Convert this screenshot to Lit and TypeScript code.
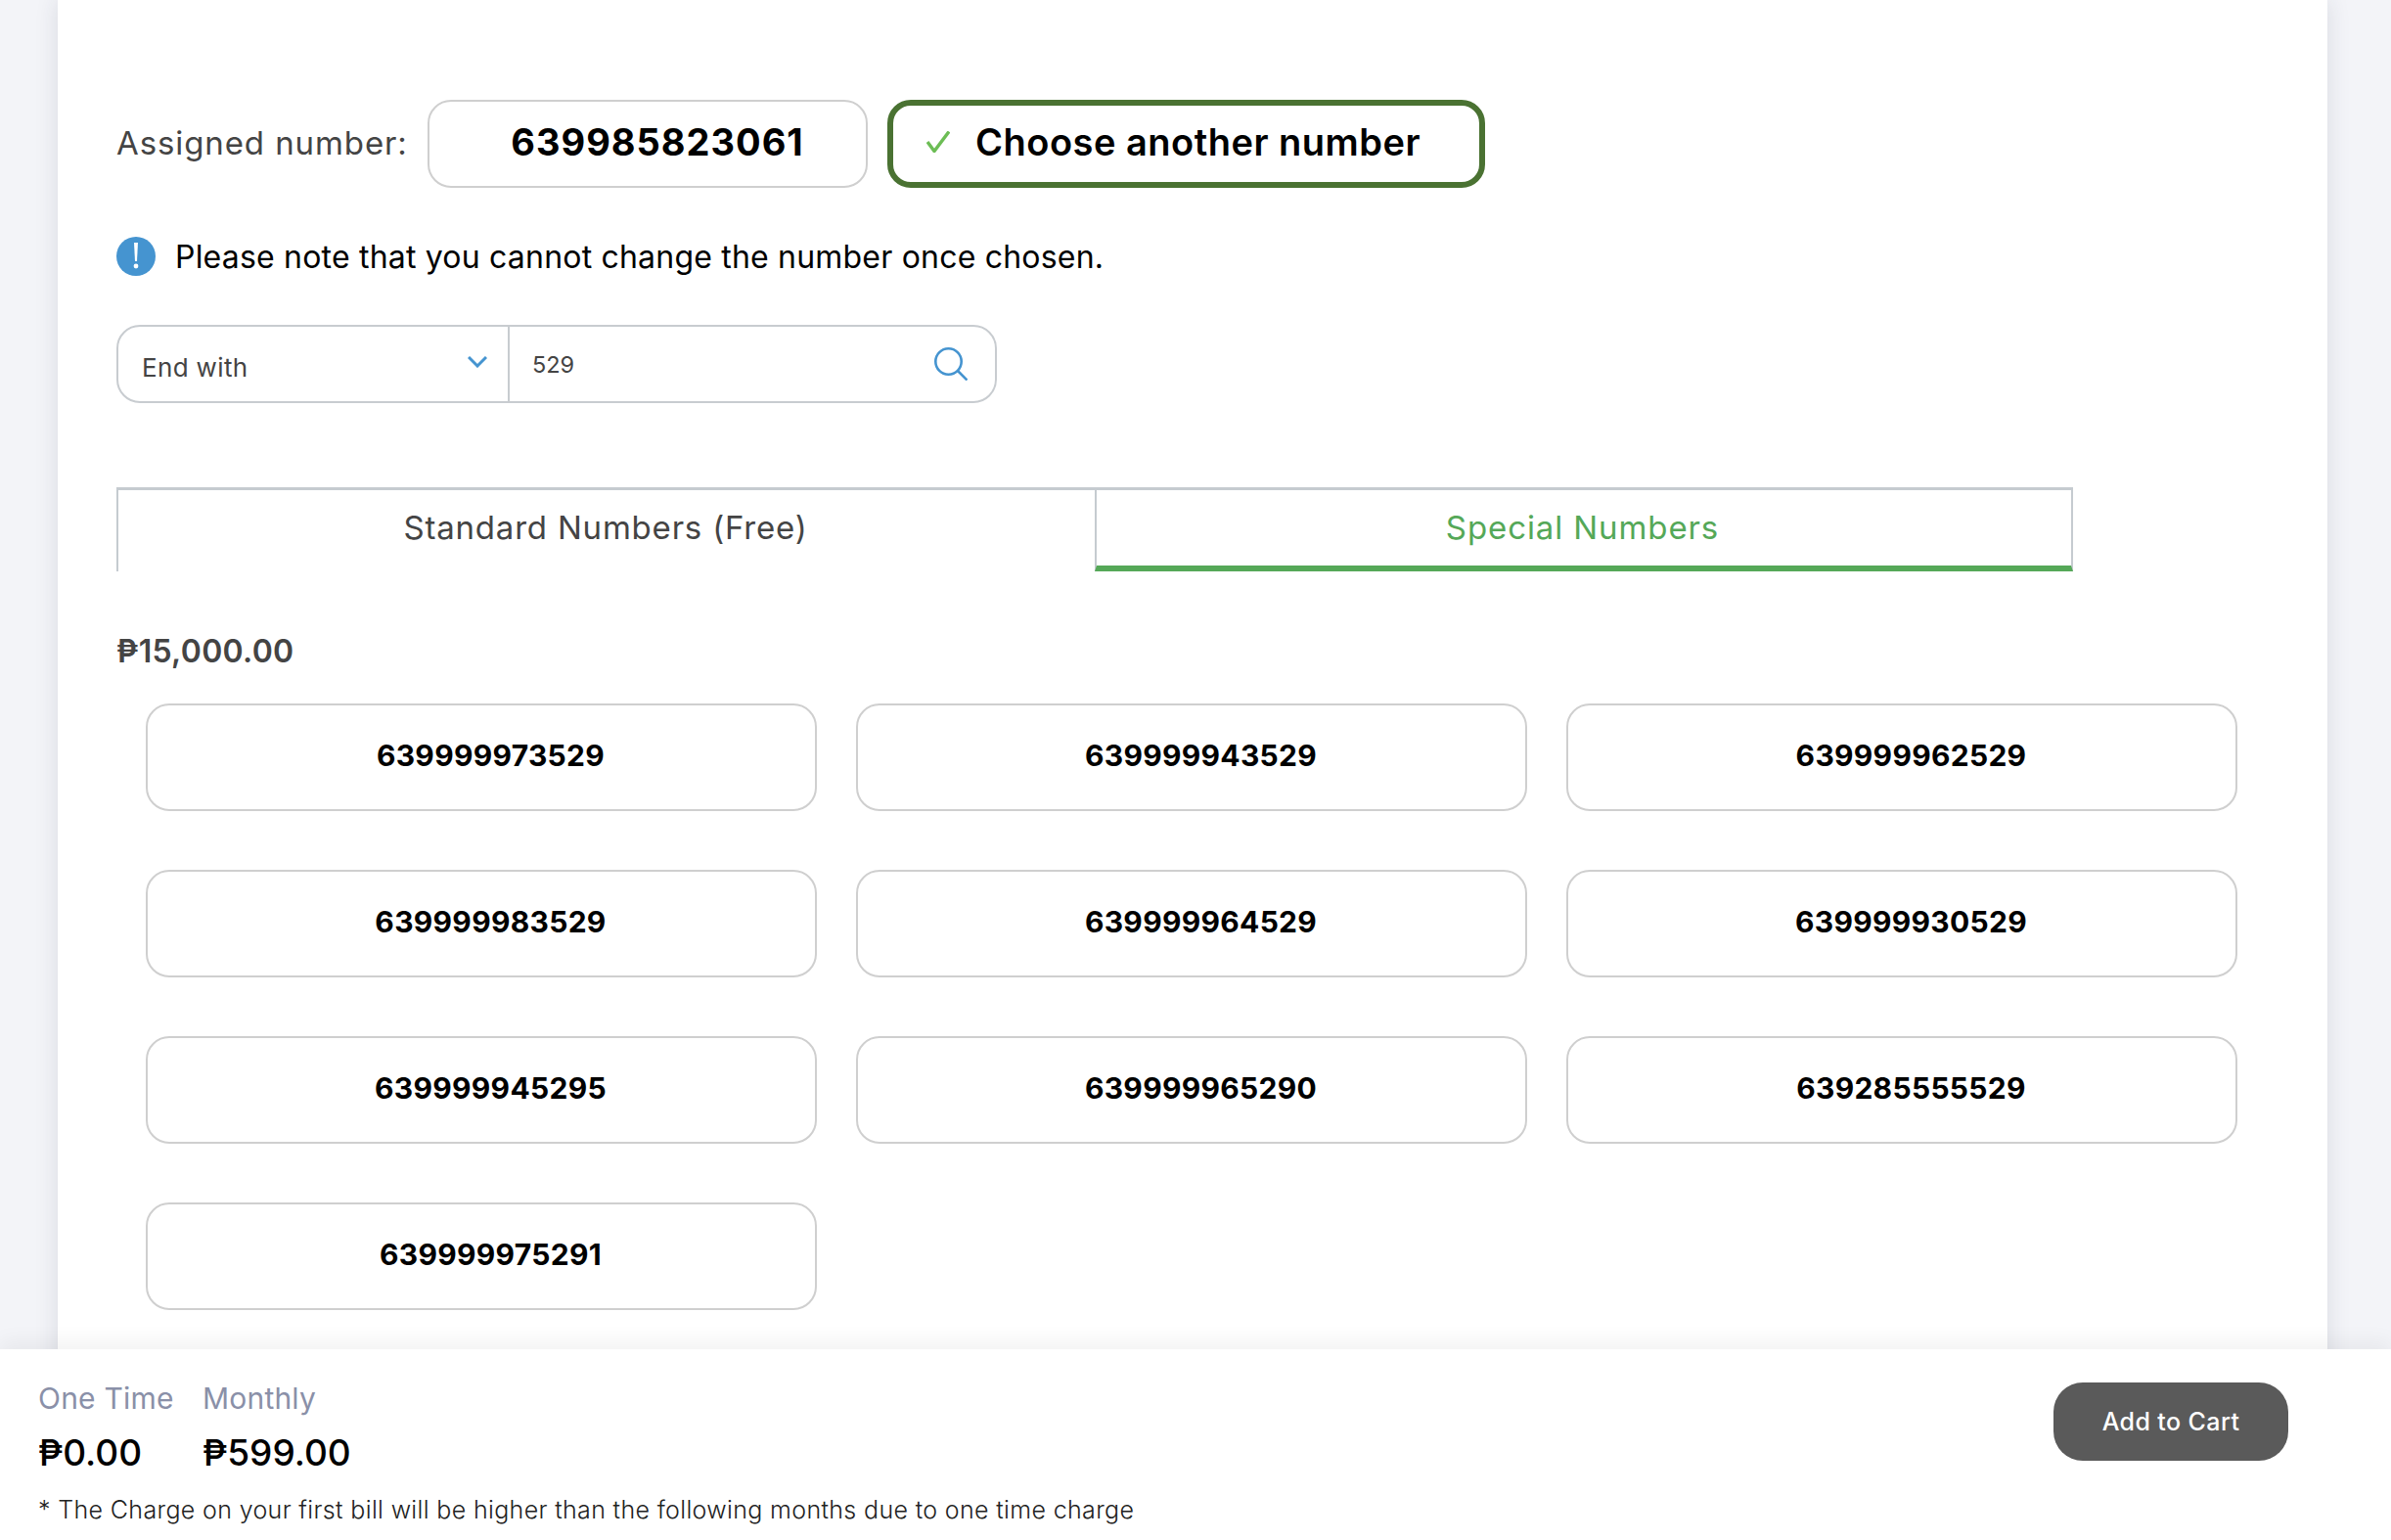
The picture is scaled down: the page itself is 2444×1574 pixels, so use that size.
import { LitElement, html, css } from "lit";
import { customElement } from "lit/decorators.js";

const NUMBERS = [
  "639999973529", "639999943529", "639999962529",
  "639999983529", "639999964529", "639999930529",
  "639999945295", "639999965290", "639285555529",
  "639999975291",
];

@customElement("app-root")
export class AppRoot extends LitElement {
  static styles = css`
    :host {
      display: flex;
      flex-direction: column;
      width: 2444px;
      height: 1574px;
      overflow: hidden;
      background: #f3f4f8;
      font-family: Inter, "Noto Sans", "DejaVu Sans", sans-serif;
      color: #000;
    }
    * { box-sizing: border-box; }
    .main {
      flex: 1;
      min-height: 0;
      overflow: hidden;
      padding: 0 65px 0 59px;
    }
    .card {
      background: #fff;
      height: 1500px;
      padding: 102px 0 0 60px;
      box-shadow: 0 0 22px rgba(40, 44, 70, 0.13);
    }
    .assigned { display: flex; align-items: center; height: 90px; }
    .assigned-label {
      width: 318px;
      padding-bottom: 3px;
      font-size: 33px;
      letter-spacing: 0.9px;
      color: #444;
    }
    .assigned-box {
      width: 450px;
      height: 90px;
      border: 2px solid #cfcfcf;
      border-radius: 24px;
      display: flex;
      align-items: center;
      justify-content: center;
      padding: 0 0 5px 20px;
      font-size: 38px;
      font-weight: 700;
      letter-spacing: 1px;
    }
    .choose {
      margin-left: 20px;
      width: 611px;
      height: 90px;
      border: 6px solid #4a7232;
      border-radius: 24px;
      display: flex;
      align-items: center;
      padding: 0 0 5px 34px;
      gap: 26px;
      font-size: 38px;
      font-weight: 600;
      letter-spacing: 0.5px;
    }
    .choose svg { display: block; flex: none; }
    .note {
      margin-top: 50px;
      height: 40px;
      display: flex;
      align-items: center;
      gap: 20px;
      font-size: 32px;
      letter-spacing: 0.2px;
    }
    .note svg { display: block; flex: none; }
    .search {
      margin-top: 50px;
      width: 900px;
      height: 80px;
      border: 2px solid #c8ccd0;
      border-radius: 24px;
      display: flex;
    }
    .select {
      width: 400px;
      border-right: 2px solid #c8ccd0;
      display: flex;
      align-items: center;
      justify-content: space-between;
      padding: 6px 21px 0 24px;
      font-size: 26px;
      letter-spacing: 0.35px;
      color: #444;
    }
    .select svg { display: block; margin-top: -10px; }
    .query {
      flex: 1;
      display: flex;
      align-items: center;
      justify-content: space-between;
      padding: 0 28px 0 23px;
      font-size: 23.5px;
      color: #444;
    }
    .query svg { display: block; }
    .tabs {
      margin-top: 86px;
      display: flex;
      width: 2000px;
      height: 86px;
    }
    .tab {
      width: 1000px;
      border-top: 3px solid #c5cbd0;
      border-left: 2px solid #c5cbd0;
      display: flex;
      align-items: center;
      justify-content: center;
      padding: 0 2px 8px 0;
      font-size: 33px;
      letter-spacing: 0.8px;
      color: #444;
    }
    .tab.active {
      border-right: 2px solid #c5cbd0;
      border-bottom: 6px solid #55a858;
      color: #55a858;
      letter-spacing: 0.9px;
      padding: 0 3px 2px 0;
    }
    .price {
      margin-top: 62px;
      height: 40px;
      line-height: 40px;
      font-size: 32px;
      font-weight: 600;
      letter-spacing: 0.3px;
      color: #444;
    }
    .grid {
      margin-top: 33px;
      padding-left: 30px;
      display: grid;
      grid-template-columns: repeat(3, 686px);
      grid-auto-rows: 110px;
      column-gap: 40px;
      row-gap: 60px;
    }
    .num {
      border: 2px solid #cfcfcf;
      border-radius: 24px;
      display: flex;
      align-items: center;
      justify-content: center;
      padding: 0 0 4px 19px;
      font-size: 30px;
      font-weight: 700;
      letter-spacing: 0.3px;
    }
    .footer {
      position: relative;
      height: 195px;
      flex: none;
      background: #fff;
      display: flex;
      justify-content: space-between;
      padding: 30px 105px 0 39px;
      box-shadow: 0 -8px 20px rgba(0, 0, 0, 0.05);
    }
    .totals {
      display: grid;
      grid-template-columns: 136px auto;
      column-gap: 32px;
      justify-content: start;
      align-content: start;
    }
    .t-label {
      height: 40px;
      line-height: 40px;
      font-size: 30px;
      letter-spacing: 0.2px;
      color: #8a90a8;
      white-space: nowrap;
    }
    .t-value {
      margin-top: 16px;
      height: 40px;
      line-height: 40px;
      font-size: 37px;
      font-weight: 500;
    }
    .t-note {
      grid-column: 1 / -1;
      margin-top: 23px;
      height: 30px;
      line-height: 30px;
      font-size: 25px;
      font-weight: 300;
      letter-spacing: 0.35px;
      white-space: nowrap;
      color: #222;
    }
    .cart {
      margin-top: 4px;
      width: 240px;
      height: 80px;
      border-radius: 30px;
      background: #5a5a5a;
      color: #fff;
      display: flex;
      align-items: center;
      justify-content: center;
      font-size: 25px;
      font-weight: 500;
      letter-spacing: 0.4px;
    }
  `;

  render() {
    return html`
      <div class="main">
        <div class="card">
          <div class="assigned">
            <div class="assigned-label">Assigned number:</div>
            <div class="assigned-box">639985823061</div>
            <div class="choose">
              <svg width="24" height="22" viewBox="0 0 24 22" fill="none" stroke="#6cbd55" stroke-width="3.4">
                <path d="M1 11 L8 20.5 L23 0.5" />
              </svg>
              <span>Choose another number</span>
            </div>
          </div>
          <div class="note">
            <svg width="40" height="40" viewBox="0 0 40 40">
              <circle cx="20" cy="20" r="20" fill="#4594d0" />
              <path d="M18 6 H22 L21 25 H19 Z" fill="#fff" />
              <circle cx="20" cy="30" r="2.4" fill="#fff" />
            </svg>
            <span>Please note that you cannot change the number once chosen.</span>
          </div>
          <div class="search">
            <div class="select">
              <span>End with</span>
              <svg width="20" height="12" viewBox="0 0 20 12" fill="none" stroke="#4594d0" stroke-width="3">
                <path d="M1 1 L10 10 L19 1" />
              </svg>
            </div>
            <div class="query">
              <span>529</span>
              <svg width="34" height="34" viewBox="0 0 34 34" fill="none" stroke="#4594d0" stroke-width="2.6">
                <circle cx="14.5" cy="14.5" r="13.2" />
                <path d="M24 24 L33.5 33.5" />
              </svg>
            </div>
          </div>
          <div class="tabs">
            <div class="tab">Standard Numbers (Free)</div>
            <div class="tab active">Special Numbers</div>
          </div>
          <div class="price">₱15,000.00</div>
          <div class="grid">
            ${NUMBERS.map((n) => html`<div class="num">${n}</div>`)}
          </div>
        </div>
      </div>
      <div class="footer">
        <div class="totals">
          <div class="t-label">One Time</div>
          <div class="t-label">Monthly</div>
          <div class="t-value">₱0.00</div>
          <div class="t-value">₱599.00</div>
          <div class="t-note">* The Charge on your first bill will be higher than the following months due to one time charge</div>
        </div>
        <div class="cart">Add to Cart</div>
      </div>
    `;
  }
}
